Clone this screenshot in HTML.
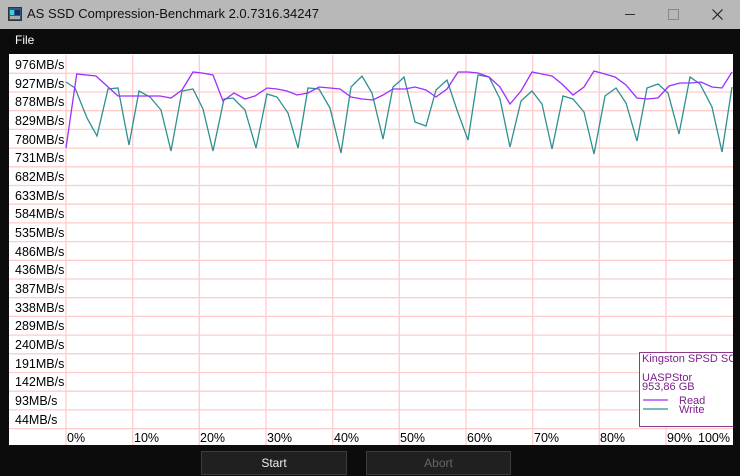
<!DOCTYPE html>
<html><head><style>
*{margin:0;padding:0}
body{width:740px;height:476px;background:#0c0c0c;position:relative;overflow:hidden;font-family:"Liberation Sans",Arial,sans-serif}
#tb{position:absolute;left:0;top:0;width:740px;height:29px;background:#b8b8b8}
#tb .t{position:absolute;left:27px;top:6px;font-size:13px;color:#111}
#menu{position:absolute;left:15px;top:33px;font-size:12px;color:#fff}
.btn{position:absolute;top:451px;height:22px;border:1px solid #3c3c3c;background:#202020;color:#eee;font-size:12px;text-align:center;line-height:22px}
</style></head><body>
<div id="tb">
<svg style="position:absolute;left:8px;top:7px" width="14" height="14"><rect x="0.5" y="0.5" width="13" height="13" fill="#2b5c8a" stroke="#333"/><rect x="2" y="3" width="4" height="5" fill="#3ad0e0"/><rect x="7" y="3" width="5" height="5" fill="#1a2a5a"/><rect x="2" y="9" width="10" height="3" fill="#aaa"/></svg>
<div class="t">AS SSD Compression-Benchmark 2.0.7316.34247</div>
<div style="position:absolute;left:625px;top:14px;width:10px;height:1px;background:#333"></div>
<div style="position:absolute;left:668px;top:9px;width:9px;height:9px;border:1px solid #888"></div>
<svg style="position:absolute;left:712px;top:9px" width="11" height="11"><path d="M0.5 0.5L10.5 10.5M10.5 0.5L0.5 10.5" stroke="#222" stroke-width="1.2"/></svg>
</div>
<div id="menu">File</div>
<svg style="position:absolute;left:0;top:0" width="740" height="476" font-family="Liberation Sans,Arial,sans-serif">
<rect x="9" y="54" width="724" height="391" fill="#fff"/>
<g stroke="#ffcccc" stroke-width="1.3">
<line x1="66" y1="55" x2="66" y2="445"/><line x1="132.7" y1="55" x2="132.7" y2="445"/><line x1="199.3" y1="55" x2="199.3" y2="445"/><line x1="266" y1="55" x2="266" y2="445"/><line x1="332.7" y1="55" x2="332.7" y2="445"/><line x1="399.3" y1="55" x2="399.3" y2="445"/><line x1="466" y1="55" x2="466" y2="445"/><line x1="532.7" y1="55" x2="532.7" y2="445"/><line x1="599.3" y1="55" x2="599.3" y2="445"/><line x1="666" y1="55" x2="666" y2="445"/>
<line x1="9" y1="73.3" x2="733" y2="73.3"/><line x1="9" y1="92" x2="733" y2="92"/><line x1="9" y1="110.7" x2="733" y2="110.7"/><line x1="9" y1="129.4" x2="733" y2="129.4"/><line x1="9" y1="148.1" x2="733" y2="148.1"/><line x1="9" y1="166.8" x2="733" y2="166.8"/><line x1="9" y1="185.5" x2="733" y2="185.5"/><line x1="9" y1="204.2" x2="733" y2="204.2"/><line x1="9" y1="222.9" x2="733" y2="222.9"/><line x1="9" y1="241.6" x2="733" y2="241.6"/><line x1="9" y1="260.3" x2="733" y2="260.3"/><line x1="9" y1="279" x2="733" y2="279"/><line x1="9" y1="297.7" x2="733" y2="297.7"/><line x1="9" y1="316.4" x2="733" y2="316.4"/><line x1="9" y1="335.1" x2="733" y2="335.1"/><line x1="9" y1="353.8" x2="733" y2="353.8"/><line x1="9" y1="372.5" x2="733" y2="372.5"/><line x1="9" y1="391.2" x2="733" y2="391.2"/><line x1="9" y1="409.9" x2="733" y2="409.9"/><line x1="9" y1="428.6" x2="733" y2="428.6"/>
</g>
<g font-size="12.5" fill="#000">
<text x="15" y="69">976MB/s</text><text x="15" y="88">927MB/s</text><text x="15" y="106">878MB/s</text><text x="15" y="125">829MB/s</text><text x="15" y="144">780MB/s</text><text x="15" y="162">731MB/s</text><text x="15" y="181">682MB/s</text><text x="15" y="200">633MB/s</text><text x="15" y="218">584MB/s</text><text x="15" y="237">535MB/s</text><text x="15" y="256">486MB/s</text><text x="15" y="274">436MB/s</text><text x="15" y="293">387MB/s</text><text x="15" y="312">338MB/s</text><text x="15" y="330">289MB/s</text><text x="15" y="349">240MB/s</text><text x="15" y="368">191MB/s</text><text x="15" y="386">142MB/s</text><text x="15" y="405">93MB/s</text><text x="15" y="424">44MB/s</text>
<text x="67" y="442">0%</text><text x="134" y="442">10%</text><text x="200" y="442">20%</text><text x="267" y="442">30%</text><text x="334" y="442">40%</text><text x="400" y="442">50%</text><text x="467" y="442">60%</text><text x="534" y="442">70%</text><text x="600" y="442">80%</text><text x="667" y="442">90%</text><text x="698" y="442">100%</text>
</g>
<polyline fill="none" stroke="#2e9090" stroke-width="1.3" points="66,82 75,88 87,118 97,136 108,89 118,88 129,145 139,91 150,97 161,110 171,151 182,91 193,89 203,109 213,151 224,99 233,98 245,110 256,148 267,94 277,97 288,113 298,148 308,88 319,89 330,108 341,153 351,87 362,76 372,93 383,139 393,87 400,81 404,77 415,122 426,126 436,90 447,80 457,110 468,140 478,75 489,77 500,99 510,147 521,101 532,91 542,104 552,149 563,96 573,99 584,112 594,154 605,96 616,88 626,103 637,141 647,88 658,84 668,93 679,134 690,77 700,84 712,107 722,152 732,87"/>
<polyline fill="none" stroke="#9b30ff" stroke-width="1.3" points="66,148 76.7,74 96,76 118,96 142,96 160,96 171,98 182,90 193,72 202,73 213,75 223,101 234,93 245,99 255,96 267,88 277,89 287,91 297,95 308,93 319,87 330,88 340,89 351,97 362,99 373,100 383,95 393,89 405,89 415,87 426,90 436,97 447,89 458,72 468,72 478,73 489,77 500,87 510,104 521,91 532,72 542,74 552,76 562,84 573,95 584,87 594,71 605,74 615,77 626,85 637,98 647,99 658,98 669,86 680,83 691,83 701,82 712,87 722,88 732,72"/>
<rect x="639.5" y="352.5" width="100" height="74" fill="#fff" stroke="#8b3a8b"/>
<g font-size="11" fill="#7a1f8a">
<text x="642" y="362">Kingston SPSD SCSI</text>
<text x="642" y="381">UASPStor</text>
<text x="642" y="390">953,86 GB</text>
<text x="679" y="404">Read</text>
<text x="679" y="413">Write</text>
</g>
<line x1="643" y1="400" x2="668" y2="400" stroke="#9b30ff" stroke-width="1.3"/>
<line x1="643" y1="409" x2="668" y2="409" stroke="#2e9090" stroke-width="1.3"/>
<rect x="733" y="54" width="7" height="392" fill="#0c0c0c"/>
</svg>
<div class="btn" style="left:201px;width:144px">Start</div>
<div class="btn" style="left:366px;width:143px;color:#666">Abort</div>
</body></html>
